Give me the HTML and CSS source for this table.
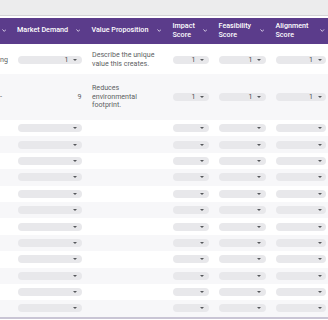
FILE: index.html
```html
<!DOCTYPE html>
<html>
<head>
<meta charset="utf-8">
<link rel="stylesheet" href="styles.css">
</head>
<body>
<div class="topbar"></div>
<div class="table">
  <div class="row head">
    <div class="hcell c0"><svg class="chev" viewBox="0 0 6 4"><polyline points="0.6,0.6 3,3.2 5.4,0.6"/></svg></div>
    <div class="hcell"><span class="lbl">Market Demand</span><svg class="chev" viewBox="0 0 6 4"><polyline points="0.6,0.6 3,3.2 5.4,0.6"/></svg></div>
    <div class="hcell"><span class="lbl">Value Proposition</span><svg class="chev" viewBox="0 0 6 4"><polyline points="0.6,0.6 3,3.2 5.4,0.6"/></svg></div>
    <div class="hcell"><span class="lbl">Impact<br>Score</span><svg class="chev" viewBox="0 0 6 4"><polyline points="0.6,0.6 3,3.2 5.4,0.6"/></svg></div>
    <div class="hcell"><span class="lbl">Feasibility<br>Score</span><svg class="chev" viewBox="0 0 6 4"><polyline points="0.6,0.6 3,3.2 5.4,0.6"/></svg></div>
    <div class="hcell"><span class="lbl">Alignment<br>Score</span><svg class="chev" viewBox="0 0 6 4"><polyline points="0.6,0.6 3,3.2 5.4,0.6"/></svg></div>
  </div>

  <div class="row r1">
    <div class="cell c0"><span class="txt">ng</span></div>
    <div class="cell"><div class="pill"><span>1</span><i class="tri"></i></div></div>
    <div class="cell"><span class="txt">Describe the unique<br>value this creates.</span></div>
    <div class="cell"><div class="pill"><span>1</span><i class="tri"></i></div></div>
    <div class="cell"><div class="pill"><span>1</span><i class="tri"></i></div></div>
    <div class="cell"><div class="pill"><span>1</span><i class="tri"></i></div></div>
  </div>

  <div class="row r2">
    <div class="cell c0"><span class="txt">-</span></div>
    <div class="cell end"><span class="txt">9</span></div>
    <div class="cell"><span class="txt">Reduces<br>environmental<br>footprint.</span></div>
    <div class="cell"><div class="pill"><span>1</span><i class="tri"></i></div></div>
    <div class="cell"><div class="pill"><span>1</span><i class="tri"></i></div></div>
    <div class="cell"><div class="pill"><span>1</span><i class="tri"></i></div></div>
  </div>

  <div class="row re"><div class="cell c0"></div><div class="cell"><div class="pill"><i class="tri"></i></div></div><div class="cell"></div><div class="cell"><div class="pill"><i class="tri"></i></div></div><div class="cell"><div class="pill"><i class="tri"></i></div></div><div class="cell"><div class="pill"><i class="tri"></i></div></div></div>
  <div class="row re"><div class="cell c0"></div><div class="cell"><div class="pill"><i class="tri"></i></div></div><div class="cell"></div><div class="cell"><div class="pill"><i class="tri"></i></div></div><div class="cell"><div class="pill"><i class="tri"></i></div></div><div class="cell"><div class="pill"><i class="tri"></i></div></div></div>
  <div class="row re"><div class="cell c0"></div><div class="cell"><div class="pill"><i class="tri"></i></div></div><div class="cell"></div><div class="cell"><div class="pill"><i class="tri"></i></div></div><div class="cell"><div class="pill"><i class="tri"></i></div></div><div class="cell"><div class="pill"><i class="tri"></i></div></div></div>
  <div class="row re"><div class="cell c0"></div><div class="cell"><div class="pill"><i class="tri"></i></div></div><div class="cell"></div><div class="cell"><div class="pill"><i class="tri"></i></div></div><div class="cell"><div class="pill"><i class="tri"></i></div></div><div class="cell"><div class="pill"><i class="tri"></i></div></div></div>
  <div class="row re"><div class="cell c0"></div><div class="cell"><div class="pill"><i class="tri"></i></div></div><div class="cell"></div><div class="cell"><div class="pill"><i class="tri"></i></div></div><div class="cell"><div class="pill"><i class="tri"></i></div></div><div class="cell"><div class="pill"><i class="tri"></i></div></div></div>
  <div class="row re"><div class="cell c0"></div><div class="cell"><div class="pill"><i class="tri"></i></div></div><div class="cell"></div><div class="cell"><div class="pill"><i class="tri"></i></div></div><div class="cell"><div class="pill"><i class="tri"></i></div></div><div class="cell"><div class="pill"><i class="tri"></i></div></div></div>
  <div class="row re"><div class="cell c0"></div><div class="cell"><div class="pill"><i class="tri"></i></div></div><div class="cell"></div><div class="cell"><div class="pill"><i class="tri"></i></div></div><div class="cell"><div class="pill"><i class="tri"></i></div></div><div class="cell"><div class="pill"><i class="tri"></i></div></div></div>
  <div class="row re"><div class="cell c0"></div><div class="cell"><div class="pill"><i class="tri"></i></div></div><div class="cell"></div><div class="cell"><div class="pill"><i class="tri"></i></div></div><div class="cell"><div class="pill"><i class="tri"></i></div></div><div class="cell"><div class="pill"><i class="tri"></i></div></div></div>
  <div class="row re"><div class="cell c0"></div><div class="cell"><div class="pill"><i class="tri"></i></div></div><div class="cell"></div><div class="cell"><div class="pill"><i class="tri"></i></div></div><div class="cell"><div class="pill"><i class="tri"></i></div></div><div class="cell"><div class="pill"><i class="tri"></i></div></div></div>
  <div class="row re"><div class="cell c0"></div><div class="cell"><div class="pill"><i class="tri"></i></div></div><div class="cell"></div><div class="cell"><div class="pill"><i class="tri"></i></div></div><div class="cell"><div class="pill"><i class="tri"></i></div></div><div class="cell"><div class="pill"><i class="tri"></i></div></div></div>
  <div class="row re"><div class="cell c0"></div><div class="cell"><div class="pill"><i class="tri"></i></div></div><div class="cell"></div><div class="cell"><div class="pill"><i class="tri"></i></div></div><div class="cell"><div class="pill"><i class="tri"></i></div></div><div class="cell"><div class="pill"><i class="tri"></i></div></div></div>
  <div class="row re"><div class="cell c0"></div><div class="cell"><div class="pill"><i class="tri"></i></div></div><div class="cell"></div><div class="cell"><div class="pill"><i class="tri"></i></div></div><div class="cell"><div class="pill"><i class="tri"></i></div></div><div class="cell"><div class="pill"><i class="tri"></i></div></div></div>
  <div class="bottom"></div>
</div>
</body>
</html>
```
FILE: styles.css
```css
html, body {
  margin: 0;
  padding: 0;
  background: #ffffff;
  overflow: hidden;
}
body {
  width: 328px;
  height: 320px;
  font-family: Roboto, "Liberation Sans", sans-serif;
}
.topbar {
  height: 15px;
  background: #ececed;
  border-bottom: 1px solid #d3d3d6;
  margin-bottom: 1.5px;
}
.table {
  width: 328px;
  overflow: hidden;
}
.row {
  display: grid;
  grid-template-columns: 9.5px 74.5px 81px 46px 57px 60.5px;
}
.head {
  height: 26px;
  background: #5b3c8b;
  color: #ffffff;
}
.hcell {
  display: flex;
  align-items: center;
  justify-content: space-between;
  padding: 0 4px 0 7.5px;
  min-width: 0;
}
.hcell.c0 {
  justify-content: flex-end;
  padding: 0 3.5px 0 0;
}
.lbl {
  font-size: 7.2px;
  font-weight: 500;
  line-height: 8.4px;
  white-space: nowrap;
}
.chev {
  width: 4.5px;
  height: 3px;
  flex: none;
  fill: none;
  stroke: #e9e2f3;
  stroke-width: 1.1;
}
.cell {
  display: flex;
  align-items: center;
  padding: 0 2.5px 0 8px;
  min-width: 0;
  overflow: hidden;
}
.cell.c0 {
  padding: 0;
}
.cell.end {
  justify-content: flex-end;
}
.txt {
  font-size: 7.1px;
  line-height: 8.8px;
  color: #5c5f63;
  white-space: nowrap;
}
.r1 {
  height: 30.5px;
  background: #ffffff;
}
.r1 .cell {
  padding-top: 3px;
}
.r1 .cell .pill {
  margin-top: -1px;
}
.r2 {
  height: 46px;
  background: #f7f7f9;
}
.re {
  height: 16.4px;
}
.re:nth-child(odd) {
  background: #f7f7f9;
}
.re:nth-child(even) {
  background: #ffffff;
}
.pill {
  flex: 1;
  height: 8px;
  border-radius: 4px;
  background: #e8e8eb;
  display: flex;
  align-items: center;
  justify-content: flex-end;
  gap: 4.5px;
  padding-right: 4.5px;
  font-size: 7px;
  color: #4a4c50;
}
.tri {
  width: 0;
  height: 0;
  border-left: 2px solid transparent;
  border-right: 2px solid transparent;
  border-top: 2.5px solid #55575b;
}
.bottom {
  height: 2px;
  background: #c9c5d5;
}
```
